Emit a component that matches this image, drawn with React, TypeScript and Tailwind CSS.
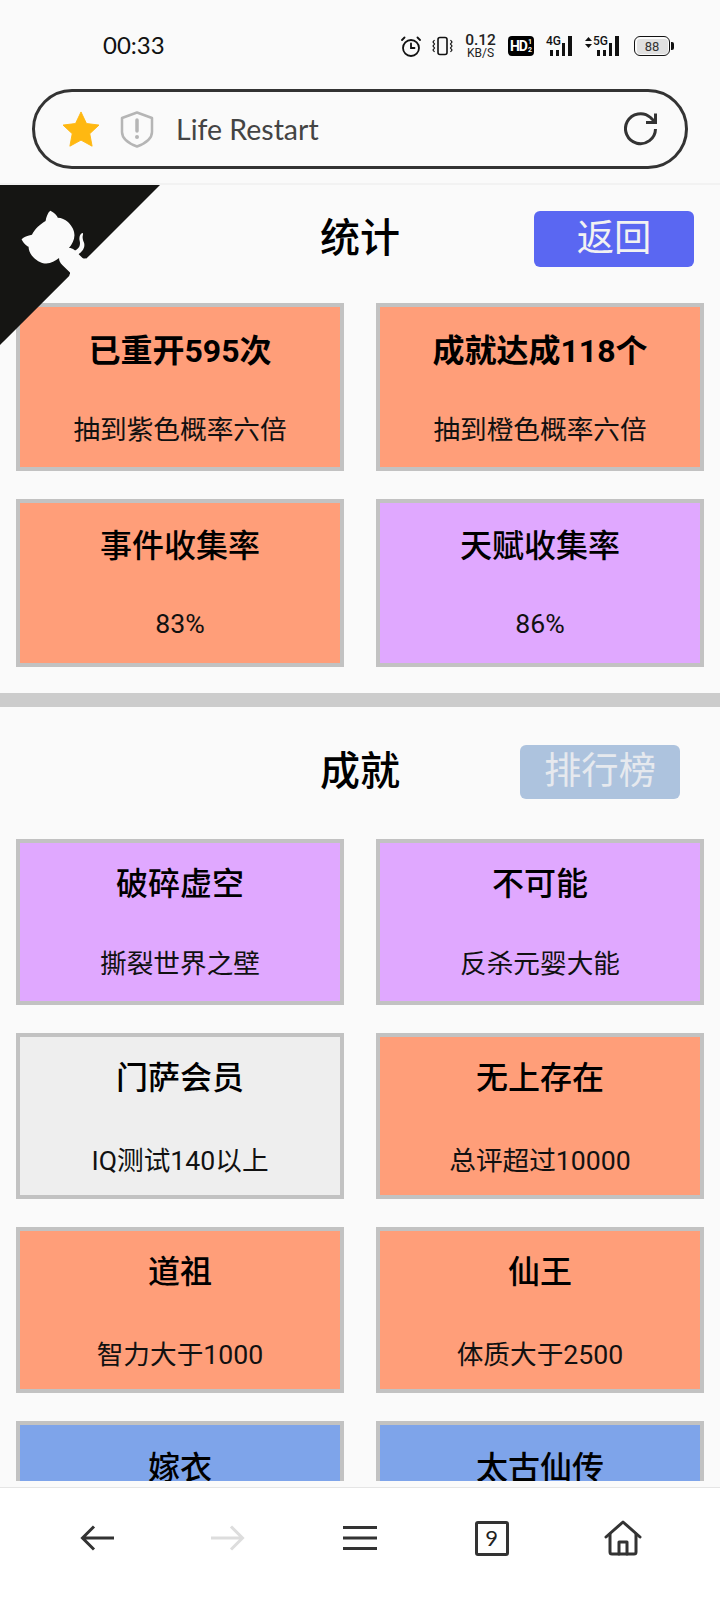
const cjk = "font-['Roboto','Noto_Sans_CJK_SC',sans-serif]";

function Signal({ heights }: { heights: number[] }) {
  return (
    <div className="flex items-end gap-[3px] h-[20px]">
      {heights.map((h, i) => (
        <div key={i} className={i === 3 ? "w-[4px] bg-[#111]" : "w-[3px] bg-[#111]"} style={{ height: h }} />
      ))}
    </div>
  );
}

function StatusBar() {
  return (
    <div className="flex items-center h-[64px] pt-[36px] pb-[8px] pl-[103px] pr-[46px] text-[#111]">
      <span className="font-['Lato',sans-serif] text-[24px] leading-[20px] w-[62px] mb-[2px]">00:33</span>
      <div className="ml-auto flex items-center">
        <svg width="20" height="21" viewBox="0 0 20 21" fill="none" stroke="#111" strokeWidth="1.8" strokeLinecap="round">
          <circle cx="10" cy="12" r="8" />
          <path d="M10 7.500V12H13.500" />
          <path d="M1 4 3.500 1.500M19 4 16.500 1.500" />
        </svg>
        <svg className="ml-[11px]" width="21" height="20" viewBox="0 0 21 20" fill="none" stroke="#111" strokeWidth="1.6">
          <rect x="6" y="1.500" width="9" height="17" rx="2" />
          <path d="M2.500 4 1 6l1.500 2L1 10l1.500 2L1 14l1.500 2M18.500 4 20 6l-1.500 2L20 10l-1.500 2L20 14l-1.500 2" strokeWidth="1.200" />
        </svg>
        <div className="ml-[13px] w-[29px] flex flex-col items-center font-['Roboto',sans-serif] text-[#222]">
          <span className="text-[15.500px] leading-[14px] font-medium">0.12</span>
          <span className="text-[12px] leading-[12px]">KB/S</span>
        </div>
        <div className="ml-[13px] w-[26px] h-[20px] rounded-[4px] bg-black text-white flex items-center justify-center font-['Roboto',sans-serif] font-bold leading-none">
          <span className="text-[14px] tracking-[-1px]">HD</span>
          <span className="flex flex-col text-[7px] leading-[8px] ml-[1px]">
            <span>1</span>
            <span>2</span>
          </span>
        </div>
        <div className="ml-[12px] w-[29px] h-[20px] flex items-end relative">
          <span className="absolute left-0 top-[-1px] font-['Roboto',sans-serif] text-[12px] leading-[12px] font-medium">4G</span>
          <div className="ml-[4px]"><Signal heights={[6, 6, 13, 20]} /></div>
        </div>
        <div className="ml-[10px] w-[37px] h-[20px] flex items-end relative">
          <svg className="absolute left-0 top-[1px]" width="7" height="11" viewBox="0 0 7 11" fill="#111"><path d="M3.500 0 7 4H0ZM3.500 11 0 7h7Z" /></svg>
          <span className="absolute left-[8px] top-[-1px] font-['Roboto',sans-serif] text-[12px] leading-[12px] font-medium">5G</span>
          <div className="ml-[12px]"><Signal heights={[6, 6, 13, 20]} /></div>
        </div>
        <div className="ml-[12px] flex items-center">
          <div className="w-[36px] h-[20px] rounded-[6px] border-[1.5px] border-[#111] p-[1.5px] flex">
            <div className="flex-1 rounded-[3px] bg-[#e0e0e0] flex items-center justify-center font-['Roboto',sans-serif] text-[13px] leading-none text-[#333]">88</div>
          </div>
          <div className="w-[3px] h-[8px] bg-[#111] rounded-r-[2px] ml-[1px]" />
        </div>
      </div>
    </div>
  );
}

function UrlBar() {
  return (
    <div className="pt-[25px] pb-[14px] px-[32px] border-b-2 border-[#f2f2f2]">
      <div className="h-[80px] rounded-full border-[3px] border-[#333] flex items-center pl-[27px] pr-[27px]">
        <svg width="38" height="36" viewBox="0 0 24 23" fill="#ffb811">
          <path d="M12 .6l3.500 7.400 8 1-5.900 5.500 1.500 8L12 18.600 4.900 22.500l1.500-8L.5 9l8-1z" strokeLinejoin="round" stroke="#ffb811" strokeWidth=".6" />
        </svg>
        <svg className="ml-[20px]" width="34" height="37" viewBox="0 0 34 37" fill="none" stroke="#b5b5b5" strokeWidth="2.500">
          <path d="M17 1.500 32 7v14c0 7-7 11.500-15 14.500C9 32.500 2 28 2 21V7Z" strokeLinejoin="round" />
          <path d="M17 9v11" strokeWidth="3.500" strokeLinecap="round" />
          <circle cx="17" cy="26" r="2" fill="#b5b5b5" stroke="none" />
        </svg>
        <span className="ml-[22px] font-['Lato',sans-serif] text-[28.500px] leading-none text-[#444]">Life Restart</span>
        <svg className="ml-auto" width="34" height="34" viewBox="0 0 34 34" fill="none" stroke="#333" strokeWidth="3">
          <path d="M31.500 17A15 15 0 1 1 26.500 5.500L31 10" />
          <path d="M31.500 1.500V10.500H22" />
        </svg>
      </div>
    </div>
  );
}

function Card({ t, s, bg, bold, h, tm, sm }: { t: string; s?: string; bg: string; bold?: boolean; h: string; tm: string; sm: string }) {
  return (
    <div className={`${bg} ${h} border-4 border-[#c2c2c2] flex flex-col items-center text-black ${cjk}`}>
      <div className={`${tm} text-[32px] leading-[48px] ${bold ? "font-bold" : "font-medium"}`}>{t}</div>
      {s ? <div className={`${sm} text-[26.670px] leading-[40px] text-[#111]`}>{s}</div> : null}
    </div>
  );
}

const orange = "bg-[#ff9e79]";
const purple = "bg-[#e0a8ff]";
const gray = "bg-[#eeeeee]";
const blue = "bg-[#7ea4ea]";

function Octocat() {
  return (
    <svg className="absolute left-0 top-0 -scale-x-100 text-[#fafafa] fill-[#151513]" width="160" height="160" viewBox="0 0 250 250">
      <path d="M0,0 L115,115 L130,115 L142,142 L250,250 L250,0 Z" />
      <path fill="currentColor" d="M128.3,109.0 C113.8,99.7 119.0,89.6 119.0,89.6 C122.0,82.7 120.5,78.6 120.5,78.6 C119.2,72.0 123.4,76.3 123.4,76.3 C127.3,80.9 125.5,87.3 125.5,87.3 C122.9,97.6 130.6,101.9 134.4,103.2" />
      <path fill="currentColor" d="M115.0,115.0 C114.9,115.1 118.7,116.5 119.8,115.4 L133.7,101.6 C136.9,99.2 139.9,98.4 142.2,98.6 C133.8,88.0 127.5,74.4 143.8,58.0 C148.5,53.4 154.0,51.2 159.7,51.0 C160.3,49.4 163.2,43.6 171.4,40.1 C171.4,40.1 176.1,42.5 178.8,56.2 C183.1,58.6 187.2,61.8 190.9,65.4 C194.5,69.0 197.700,73.2 200.1,77.6 C213.8,80.2 216.3,84.9 216.3,84.9 C212.7,93.1 206.9,96.0 205.4,96.6 C205.1,102.4 203.0,107.8 198.3,112.5 C181.9,128.9 168.3,122.5 157.7,114.1 C157.9,116.9 156.7,120.9 152.7,124.9 L141.0,136.5 C139.8,137.7 141.6,141.9 141.8,141.8 Z" />
    </svg>
  );
}

function Nav() {
  return (
    <div className="h-[113px] bg-white border-t border-[#e5e5e5] px-[31px] pb-[12px] grid grid-cols-5 items-center justify-items-center">
      <svg width="34" height="26" viewBox="0 0 34 26" fill="none" stroke="#333" strokeWidth="3"><path d="M34 13H3M14 1.500 2.500 13 14 24.500" /></svg>
      <svg width="34" height="26" viewBox="0 0 34 26" fill="none" stroke="#dddddd" strokeWidth="3"><path d="M0 13h31M20 1.500 31.500 13 20 24.500" /></svg>
      <svg width="34" height="24" viewBox="0 0 34 24" fill="none" stroke="#333" strokeWidth="3"><path d="M0 1.500H34M0 12H34M0 22.500H34" /></svg>
      <div className="w-[34px] h-[35px] border-[3px] border-[#333] rounded-[3px] flex items-center justify-center font-['Lato',sans-serif] text-[22px] leading-none text-[#222]">9</div>
      <svg width="38" height="36" viewBox="0 0 38 36" fill="none" stroke="#333" strokeWidth="3" strokeLinejoin="round" strokeLinecap="round">
        <path d="M2 17 19 2l17 15" />
        <path d="M6 14v18a2 2 0 0 0 2 2h22a2 2 0 0 0 2-2V14" />
        <path d="M15 34V22h8v12" />
      </svg>
    </div>
  );
}

export default function App() {
  return (
    <div className="w-[720px] h-[1600px] bg-[#fafafa] flex flex-col overflow-hidden">
      <StatusBar />
      <UrlBar />
      <div className="relative h-[1296px] overflow-hidden mb-[6px]">
        <div className="grid grid-cols-[1fr_auto_1fr] items-center mt-[26px] h-[56px]">
          <div />
          <h2 className={`text-[40px] leading-[56px] font-medium text-black ${cjk}`}>统计</h2>
          <div className={`justify-self-end mr-[26px] w-[160px] h-[56px] rounded-[6px] bg-[#5a67f2] text-[#f2f2f2] flex items-center justify-center text-[37.330px] leading-none ${cjk}`}>返回</div>
        </div>
        <div className="grid grid-cols-2 gap-x-8 gap-y-[28px] px-4 mt-[36px]">
          <Card bg={orange} h="h-[168px]" bold tm="mt-[20px]" sm="mt-[35px]" t="已重开595次" s="抽到紫色概率六倍" />
          <Card bg={orange} h="h-[168px]" bold tm="mt-[20px]" sm="mt-[35px]" t="成就达成118个" s="抽到橙色概率六倍" />
          <Card bg={orange} h="h-[168px]" tm="mt-[19px]" sm="mt-[34px]" t="事件收集率" s="83%" />
          <Card bg={purple} h="h-[168px]" tm="mt-[19px]" sm="mt-[34px]" t="天赋收集率" s="86%" />
        </div>
        <div className="h-[14px] bg-[#cccccc] mt-[26px]" />
        <div className="grid grid-cols-[1fr_auto_1fr] items-center mt-[37px] h-[54px]">
          <div />
          <h2 className={`text-[40px] leading-[56px] font-medium text-black ${cjk}`}>成就</h2>
          <div className={`justify-self-end mr-[40px] w-[160px] h-[54px] rounded-[6px] bg-[#adc3de] text-[#e6e9ee] flex items-center justify-center text-[37.330px] leading-none ${cjk}`}>排行榜</div>
        </div>
        <div className="grid grid-cols-2 gap-x-8 gap-y-[28px] px-4 mt-[41px]">
          <Card bg={purple} h="h-[166px]" tm="mt-[17px]" sm="mt-[36px]" t="破碎虚空" s="撕裂世界之壁" />
          <Card bg={purple} h="h-[166px]" tm="mt-[17px]" sm="mt-[36px]" t="不可能" s="反杀元婴大能" />
          <Card bg={gray} h="h-[166px]" tm="mt-[17px]" sm="mt-[39px]" t="门萨会员" s="IQ测试140以上" />
          <Card bg={orange} h="h-[166px]" tm="mt-[17px]" sm="mt-[39px]" t="无上存在" s="总评超过10000" />
          <Card bg={orange} h="h-[166px]" tm="mt-[17px]" sm="mt-[39px]" t="道祖" s="智力大于1000" />
          <Card bg={orange} h="h-[166px]" tm="mt-[17px]" sm="mt-[39px]" t="仙王" s="体质大于2500" />
          <Card bg={blue} h="h-[166px]" tm="mt-[19px]" sm="mt-[37px]" t="嫁衣" />
          <Card bg={blue} h="h-[166px]" tm="mt-[19px]" sm="mt-[37px]" t="太古仙传" />
        </div>
        <Octocat />
      </div>
      <Nav />
    </div>
  );
}
